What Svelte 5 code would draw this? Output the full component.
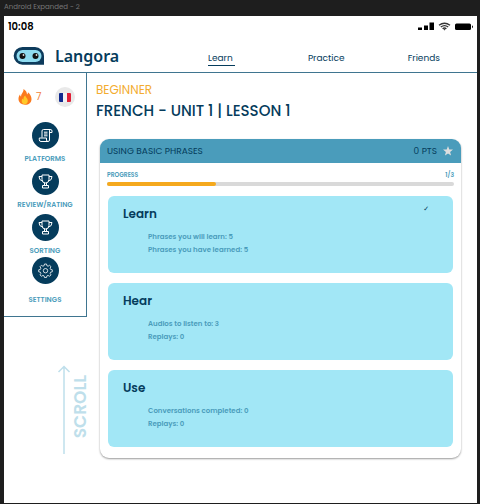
<script>
  const tabs = ['Learn', 'Practice', 'Friends'];
  const menu = [
    { label: 'PLATFORMS', icon: 'scroll' },
    { label: 'REVIEW/RATING', icon: 'trophy' },
    { label: 'SORTING', icon: 'trophy' },
    { label: 'SETTINGS', icon: 'gear' }
  ];
  const steps = [
    { title: 'Learn', lines: ['Phrases you will learn: 5', 'Phrases you have learned: 5'], done: true },
    { title: 'Hear', lines: ['Audios to listen to: 3', 'Replays: 0'], done: false },
    { title: 'Use', lines: ['Conversations completed: 0', 'Replays: 0'], done: false }
  ];
  const progress = 31.3;
</script>

<div class="canvas">
  <div class="frame-name">Android Expanded - 2</div>
  <div class="screen">
    <div class="status">
      <span class="time">10:08</span>
      <svg width="56" height="10" viewBox="0 0 56 10" aria-hidden="true">
        <path d="M0 5.500h4V8H0zM6 3.500h4V8H6zM11.500 0.500h4.500V8h-4.500z" />
        <g fill="none" stroke="#333" stroke-width="1.400">
          <path d="M21 3.300Q26.500-.8 32 3.300M22.800 5Q26.500 2.200 30.200 5M24.600 6.700Q26.500 5.300 28.400 6.700" />
        </g>
        <path d="M25.500 7.200h2l-1 1.200z" />
        <rect x="37" y="1.500" width="16" height="6.500" rx="1.500" />
        <path d="M54 3.300q2 1.500 0 3z" />
      </svg>
    </div>

    <header>
      <a class="brand" href="#home">
        <svg width="32" height="20" viewBox="0 0 32 20" aria-hidden="true">
          <path d="M9.500 1H22a9 9 0 0 1 9 9v8.700H9.500A8.850 8.850 0 0 1 9.500 1z" fill="#0d3b5c" />
          <rect x="3.500" y="4" width="25" height="12" rx="6" fill="#8fdcf0" />
          <circle cx="9.500" cy="10" r="3" fill="#111" />
          <circle cx="22.500" cy="10" r="3" fill="#111" />
          <circle cx="10.500" cy="9" r=".9" fill="#ddd" />
          <circle cx="23.500" cy="9" r=".9" fill="#ddd" />
        </svg>
        <span>Langora</span>
      </a>
      <nav>
        {#each tabs as tab, i}
          <a href="#{tab.toLowerCase()}" class:active={i === 0}>{tab}</a>
        {/each}
      </nav>
    </header>

    <div class="body">
      <div class="left">
        <aside>
          <div class="streak">
            <svg width="14" height="16" viewBox="0 0 14 16" aria-hidden="true">
              <path d="M5.500 0C8 1.300 9 3.500 9 5.500c.8-.6 1-1.400.9-2.300 2 1.600 3.600 4.200 3.600 6.700 0 3.600-2.700 5.800-6.400 5.800S.5 13.500.5 10c0-2.200.8-3.700 1.600-4.800 0 1.200.3 1.900 1 2.300C3 4.500 5.800 3.500 5.500 0z" fill="#fb7a1e" />
              <path d="M7.200 6.500c.4 2 2.600 2.600 2.600 5.300 0 2.200-1.300 3.500-2.900 3.500S3.700 14 3.700 12c0-1 .4-1.800.9-2.400.2.700.5 1 .9 1.100-.2-1.700.4-3.200 1.700-4.200z" fill="#ffc928" />
            </svg>
            <span>7</span>
            <button class="flag" aria-label="French">
              <svg width="12" height="9" viewBox="0 0 12 9" aria-hidden="true">
                <rect width="12" height="9" rx="1" fill="#f2f2f2" />
                <path d="M1 0h3v9H1a1 1 0 0 1-1-1V1a1 1 0 0 1 1-1z" fill="#10298e" />
                <path d="M8 0h3a1 1 0 0 1 1 1v7a1 1 0 0 1-1 1H8z" fill="#e01f37" />
              </svg>
            </button>
          </div>
          <div class="menu">
            {#each menu as item}
              <a href="#{item.label.toLowerCase()}" class:settings={item.icon === 'gear'}>
                <span class="disc">
                  {#if item.icon === 'scroll'}
                    <svg width="15" height="15" viewBox="0 0 15 15" aria-hidden="true">
                      <path d="M4 9.500V3Q4 1.500 5.500 1.500H12.500Q14 1.500 14 3V4.500H11.500M12.500 1.500Q11.500 1.700 11.500 3V12Q11.500 13.500 10 13.500H3Q1.300 13.500 1.300 11.800V10H8.500V12Q8.500 13.500 10 13.500M6 4.200h3.500M6 6h3.500M6 7.800h3.500" />
                    </svg>
                  {:else if item.icon === 'trophy'}
                    <svg width="15" height="15" viewBox="0 0 15 15" aria-hidden="true">
                      <path d="M4 1h7v4.500Q11 9 7.500 9T4 5.500zM4 2.500H1Q1 6.500 4.600 7M11 2.500h3Q14 6.500 10.400 7M6.500 9v2.200M8.500 9v2.200M4.500 11.500h6V14h-6z" />
                    </svg>
                  {:else}
                    <svg width="15" height="15" viewBox="0 0 15 15" class="thin" aria-hidden="true">
                      <path d="M6.500 1h2l.4 1.700 1.200.5 1.500-.9 1.400 1.400-.9 1.500.5 1.200 1.700.4v2l-1.700.4-.5 1.200.9 1.500-1.400 1.400-1.500-.9-1.200.5L8.500 14.500h-2l-.4-1.600-1.200-.5-1.500.9L2 11.900l.9-1.500-.5-1.200L.7 8.800v-2l1.700-.4.5-1.200L2 3.700l1.400-1.400 1.500.9 1.200-.5z" />
                      <circle cx="7.500" cy="7.700" r="2.200" />
                    </svg>
                  {/if}
                </span>
                <span>{item.label}</span>
              </a>
            {/each}
          </div>
        </aside>
        <div class="hint">
          <svg width="14" height="90" viewBox="0 0 14 90" aria-hidden="true">
            <path d="M7 89V2M1.500 7 7 1.500 12.500 7" />
          </svg>
          <span>SCROLL</span>
        </div>
      </div>

      <main>
        <p class="level">BEGINNER</p>
        <h1>FRENCH - UNIT 1 | LESSON 1</h1>
        <section class="card">
          <div class="card-head">
            <h2>USING BASIC PHRASES</h2>
            <span class="points">0 PTS</span>
            <svg width="10" height="10" viewBox="0 0 10 10" aria-hidden="true">
              <path d="M5 0l1.300 3.400 3.700.2-2.900 2.300 1 3.600L5 7.500 1.900 9.500l1-3.600L0 3.600l3.700-.2z" fill="#dedede" />
            </svg>
          </div>
          <div class="card-body">
            <div class="progress-label"><span id="progress">PROGRESS</span><span>1/3</span></div>
            <div class="track" role="progressbar" aria-labelledby="progress" aria-valuenow="1" aria-valuemax="3">
              <div class="fill" style="width: {progress}%"></div>
            </div>
            <div class="steps">
              {#each steps as step}
                <article>
                  <h3>{step.title}</h3>
                  {#each step.lines as line}
                    <p>{line}</p>
                  {/each}
                  {#if step.done}<span class="tick">✓</span>{/if}
                </article>
              {/each}
            </div>
          </div>
        </section>
      </main>
    </div>
  </div>
</div>

<style>
  :global(body) {
    margin: 0;
    background: #1e1e1e;
  }
  .canvas {
    box-sizing: border-box;
    min-height: 100vh;
    display: flex;
    flex-direction: column;
    padding: 0 3px 1px 4px;
    font-family: Poppins, Inter, 'Noto Sans', sans-serif;
    color: #053c5c;
  }
  h1, h2, h3, p {
    margin: 0;
  }
  a {
    color: inherit;
    text-decoration: none;
  }
  svg {
    display: block;
    flex: none;
  }
  .frame-name {
    font-size: 7px;
    line-height: 14px;
    padding-bottom: 2px;
    color: #777;
  }
  .screen {
    flex: 1;
    display: flex;
    flex-direction: column;
    background: #fff;
  }
  .status {
    display: flex;
    justify-content: space-between;
    align-items: center;
    height: 22px;
    padding: 0 3px 0 4px;
    color: #000;
  }
  .time {
    font-size: 10px;
    font-weight: 600;
  }
  header {
    box-sizing: border-box;
    display: flex;
    align-items: center;
    height: 35px;
    padding: 2px 0 0 9px;
    border-bottom: 1px solid #3f7590;
  }
  .brand {
    flex: none;
    display: flex;
    align-items: center;
    gap: 10px;
    width: 195px;
    font-family: 'Noto Sans', sans-serif;
    font-size: 16px;
    line-height: 20px;
    font-weight: 600;
  }
  nav {
    flex: 1;
    display: grid;
    grid-template-columns: 1fr 1fr auto;
    justify-items: start;
    padding-right: 37px;
    font-size: 9px;
    line-height: 14px;
  }
  nav a {
    padding-top: 4px;
    border-bottom: 1px solid transparent;
  }
  nav .active {
    padding-right: 2px;
    border-color: #053c5c;
  }
  .body {
    flex: 1;
    display: flex;
  }
  .left {
    flex: none;
    width: 83px;
  }
  aside {
    border: solid #3f7590;
    border-width: 0 1px 1px 0;
    padding: 14px 0 10px;
  }
  .streak {
    display: flex;
    align-items: center;
    padding-left: 14px;
    font-size: 10px;
    color: #f2813a;
  }
  .streak span {
    margin: 0 auto 0 4px;
  }
  .flag {
    display: flex;
    align-items: center;
    justify-content: center;
    width: 20px;
    height: 20px;
    margin-right: 11px;
    padding: 0;
    border: 0;
    border-radius: 50%;
    background: #e9e9e9;
  }
  .menu {
    display: flex;
    flex-direction: column;
    gap: 3px;
    padding-top: 15px;
  }
  .menu a {
    display: flex;
    flex-direction: column;
    align-items: center;
    gap: 4px;
    font-size: 7px;
    line-height: 12px;
    font-weight: 600;
    color: #4a9cbb;
  }
  .menu .settings {
    gap: 10px;
    margin-top: -3px;
  }
  .disc {
    display: flex;
    align-items: center;
    justify-content: center;
    width: 27px;
    height: 27px;
    border-radius: 50%;
    background: #053c5c;
  }
  .disc svg {
    fill: none;
    stroke: #fff;
    stroke-width: 1;
  }
  .disc .thin {
    stroke-width: 0.8;
  }
  .hint {
    display: flex;
    align-items: center;
    padding: 48px 0 0 53px;
    font-size: 17px;
    line-height: 18px;
    font-weight: 600;
    color: #bfdfeb;
  }
  .hint span {
    padding-top: 6px;
    writing-mode: vertical-rl;
    transform: rotate(180deg);
  }
  .hint svg {
    fill: none;
    stroke: currentColor;
    stroke-width: 1.5;
  }
  main {
    flex: 1;
    min-width: 0;
    padding: 8px 16px 16px 9px;
  }
  .level {
    font-size: 12px;
    line-height: 18px;
    color: #f3ac2f;
  }
  h1 {
    font-size: 15px;
    line-height: 24px;
    font-weight: 500;
  }
  .card {
    margin: 16px 0 0 4px;
    border-radius: 9px;
    overflow: hidden;
    box-shadow: 0 1px 2px rgba(0, 0, 0, 0.4);
  }
  .card-head {
    display: flex;
    align-items: center;
    gap: 6px;
    height: 24px;
    padding: 0 8px 0 7px;
    background: #4a9cbb;
    font-size: 9px;
  }
  h2 {
    flex: 1;
    font-size: 9px;
    font-weight: 400;
  }
  .card-body {
    padding: 7px 7px 11px;
  }
  .progress-label {
    display: flex;
    justify-content: space-between;
    font-size: 6px;
    line-height: 10px;
    font-weight: 600;
    color: #4a9cbb;
  }
  .track {
    height: 4px;
    margin-top: 2px;
    border-radius: 2px;
    background: #d9d9d9;
  }
  .fill {
    height: 100%;
    border-radius: 2px;
    background: #f5a91d;
  }
  .steps {
    display: flex;
    flex-direction: column;
    gap: 10px;
    padding: 10px 1px 0;
  }
  article {
    position: relative;
    min-height: 57px;
    padding: 10px 15px;
    border-radius: 6px;
    background: #a2e7f6;
  }
  h3 {
    font-size: 12px;
    line-height: 16px;
    margin-bottom: 8px;
    font-weight: 600;
  }
  article p {
    padding-left: 25px;
    font-size: 7px;
    line-height: 13px;
    font-weight: 600;
    color: #4a9cbb;
  }
  .tick {
    position: absolute;
    top: 8px;
    right: 24px;
    font: 7px/10px 'DejaVu Sans', sans-serif;
  }
</style>
